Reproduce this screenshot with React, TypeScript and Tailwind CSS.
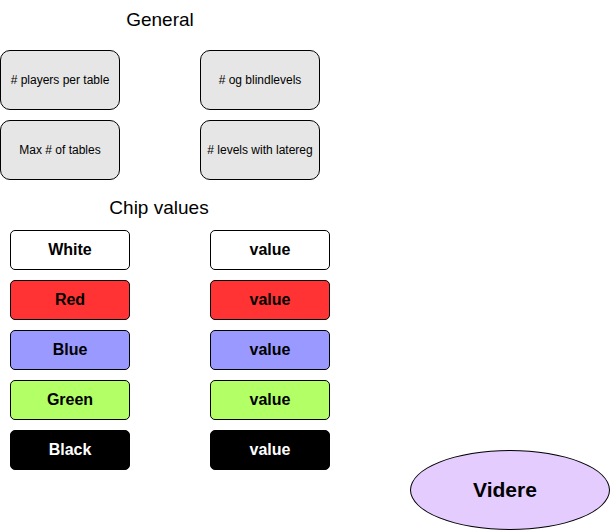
const general = [
  '# players per table',
  '# og blindlevels',
  'Max # of tables',
  '# levels with latereg',
];

const chips = [
  { name: 'White', className: 'bg-white text-black' },
  { name: 'Red', className: 'bg-[#ff3333] text-black' },
  { name: 'Blue', className: 'bg-[#9999ff] text-black' },
  { name: 'Green', className: 'bg-[#b3ff66] text-black' },
  { name: 'Black', className: 'bg-black text-white' },
];

function App() {
  return (
    <div className="w-[612px] h-[532px] bg-white text-black font-['Liberation_Sans',Arial,sans-serif] flex">
      {/* Left side - settings */}
      <div className="w-[410px] flex flex-col">
        <div className="w-[320px]">
          <h2 className="pt-[9px] text-center text-[19px] leading-[22px]">General</h2>
          <div className="mt-[19px] grid grid-cols-[120px_120px] gap-x-[80px] gap-y-[10px]">
            {general.map(label => (
              <div
                key={label}
                className="h-[60px] rounded-[10px] border border-black bg-[#e6e6e6] flex items-center justify-center text-[12px]"
              >
                {label}
              </div>
            ))}
          </div>

          <h2 className="mt-[17px] pr-[2px] text-center text-[19px] leading-[22px]">Chip values</h2>
        </div>

        {/* Chip colours + value fields */}
        <div className="mt-[11px] pl-[10px] grid grid-cols-[120px_120px] gap-x-[80px] gap-y-[10px]">
          {chips.map(chip => (
            <div key={chip.name} className="contents">
              <div className={`h-[40px] rounded-[5px] border border-black flex items-center justify-center text-[16px] font-bold ${chip.className}`}>
                {chip.name}
              </div>
              <div className={`h-[40px] rounded-[5px] border border-black flex items-center justify-center text-[16px] font-bold ${chip.className}`}>
                value
              </div>
            </div>
          ))}
        </div>
      </div>

      {/* Submit */}
      <div className="self-end mb-[2px] w-[200px] h-[80px] pr-[10px] rounded-[50%] border border-black bg-[#e5ccff] flex items-center justify-center text-[21px] font-bold">
        Videre
      </div>
    </div>
  );
}

export default App;
